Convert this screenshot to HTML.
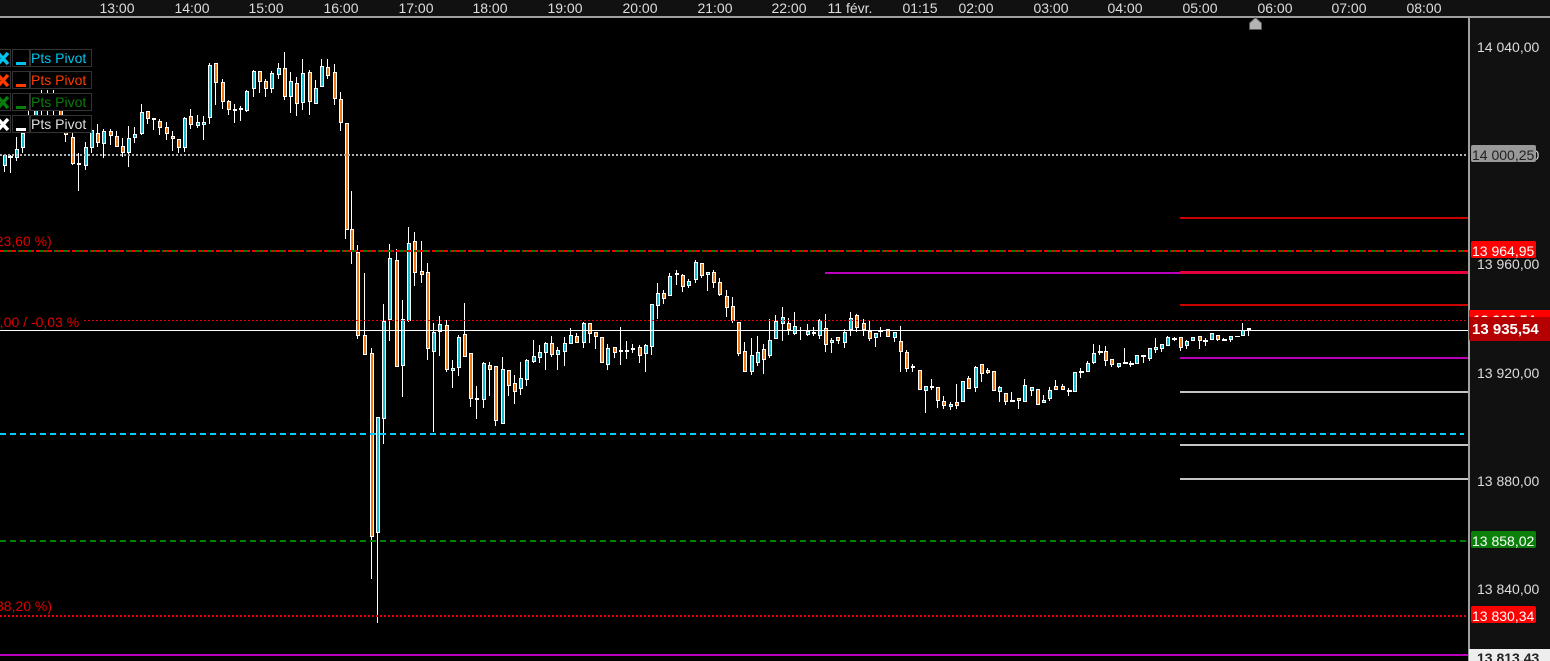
<!DOCTYPE html>
<html><head><meta charset="utf-8"><title>Chart</title>
<style>
html,body{margin:0;padding:0;background:#000}
#c{position:relative;width:1550px;height:661px;overflow:hidden;background:#000;font-family:"Liberation Sans",sans-serif;font-size:14px;line-height:16px;color:#ddd}
#c div{position:absolute;white-space:nowrap}
svg{position:absolute;left:0;top:0}
.t{top:0;width:70px;text-align:center;color:#ddd}
.p{left:1477px;color:#ddd}
.b{left:1471px;width:65px;height:17px;border-radius:2px;color:#fff;line-height:20px;overflow:hidden;text-indent:1px}
.r{color:#e00000}
.l{left:30px;width:60px;height:16px;border:1px solid #333;background:#000;text-indent:0;padding-left:0}
.i{left:12px;width:16px;height:16px;border:1px solid #333;background:#000}
.x{left:-8px;width:17px;height:16px;border:1px solid #333;background:#000}
</style></head><body><div id="c">
<svg width="1550" height="661" viewBox="0 0 1550 661" shape-rendering="crispEdges" fill="none">
<path stroke="#fff" d="M4.5 155V172M10.5 155V173M16.5 137V161M22.5 125V153M28.5 105V125M35.5 100V120M41.5 90V115M47.5 90V115M53.5 90V115M60.5 105V125M65.5 125V142M72.5 130V165M78.5 153V191M85.5 142V170M91.5 128V153M97.5 124V147M103.5 129V158M110.5 129V145M116.5 131V147M122.5 138V157M128.5 126V167M134.5 127V143M141.5 104V135M147.5 111V124M153.5 118V130M159.5 119V135M166.5 122V140M172.5 131V151M178.5 139V153M184.5 117V152M190.5 109V129M197.5 115V128M203.5 116V140M209.5 63V124M215.5 63V105M222.5 79V109M228.5 100V115M234.5 104V123M240.5 106V121M246.5 90V112M253.5 70V97M259.5 71V93M265.5 79V97M271.5 71V93M278.5 63V79M284.5 52V100M290.5 72V113M296.5 77V116M302.5 59V110M309.5 70V115M315.5 80V104M321.5 59V87M327.5 59V79M334.5 64V105M340.5 92V131M345.5 123V239M351.5 191V264M357.5 245V339M364.5 273V355M371.5 348V579M377.5 417V623M383.5 304V444M389.5 244V341M396.5 249V367M402.5 300V397M408.5 227V322M414.5 232V286M421.5 241V283M427.5 263V360M433.5 323V432M439.5 316V356M446.5 320V372M452.5 360V388M458.5 335V376M464.5 303V357M470.5 353V407M476.5 386V419M483.5 362V408M489.5 362V396M495.5 366V426M502.5 357V424M508.5 370V396M514.5 375V404M520.5 362V395M526.5 359V386M533.5 340V363M539.5 345V363M545.5 342V370M551.5 336V357M557.5 347V370M564.5 337V366M570.5 328V344M576.5 333V343M583.5 322V348M589.5 323V343M595.5 332V349M601.5 337V363M607.5 344V370M614.5 347V358M620.5 327V365M626.5 341V359M632.5 344V353M639.5 345V363M645.5 344V372M651.5 304V355M657.5 283V319M663.5 290V304M669.5 273V296M676.5 270V285M682.5 274V292M688.5 279V288M695.5 260V283M701.5 263V278M707.5 272V291M713.5 270V288M719.5 278V296M726.5 290V317M732.5 297V323M738.5 322V356M744.5 342V372M751.5 338V375M757.5 336V366M763.5 344V374M769.5 319V358M775.5 315V339M782.5 307V341M788.5 318V335M794.5 312V335M800.5 327V340M807.5 324V336M813.5 327V336M819.5 319V339M825.5 314V352M831.5 338V353M838.5 337V344M844.5 329V348M850.5 312V336M856.5 314V332M863.5 319V336M869.5 321V341M875.5 333V347M880.5 327V337M887.5 329V337M894.5 332V342M900.5 326V372M906.5 350V372M912.5 364V372M919.5 370V390M925.5 386V413M931.5 379V390M937.5 387V408M943.5 396V409M950.5 402V410M956.5 384V409M962.5 381V402M968.5 376V389M975.5 366V392M981.5 364V382M987.5 368V374M993.5 371V391M999.5 386V402M1005.5 393V405M1011.5 392V402M1018.5 398V409M1024.5 379V402M1031.5 387V396M1037.5 389V405M1043.5 395V403M1049.5 387V401M1055.5 380V390M1062.5 384V390M1068.5 388V396M1074.5 372V392M1080.5 368V378M1087.5 361V372M1093.5 344V364M1099.5 345V355M1105.5 346V366M1111.5 359V367M1118.5 363V368M1124.5 348V364M1130.5 361V367M1136.5 355V364M1143.5 356V363M1149.5 348V361M1155.5 338V353M1161.5 344V352M1167.5 336V346M1174.5 337V341M1180.5 337V351M1186.5 340V349M1192.5 337V341M1199.5 336V349M1205.5 338V346M1211.5 333V340M1217.5 335V341M1223.5 338V341M1230.5 336V342M1242.5 323V336M1248.5 328V336"/>
<path fill="#fff" d="M8 156h5v2H8zM77 163h4v2h-4zM152 118h4v2h-4zM233 109h4v2h-4zM239 108h4v2h-4zM475 398h4v2h-4zM619 350h4v2h-4zM625 350h4v2h-4zM631 348h4v2h-4zM675 273h4v2h-4zM812 332h4v2h-4zM878 330h5v2h-5zM930 386h4v2h-4zM1010 400h5v2h-5zM1067 390h5v2h-5zM1079 371h5v2h-5zM1098 351h5v2h-5zM1123 362h5v2h-5zM1129 363h5v2h-5zM1141 355h5v2h-5zM1172 338h5v2h-5zM1203 340h5v2h-5zM1222 339h5v2h-5zM1235 336h5v1h-5z"/>
<path fill="#14bcd2" stroke="#fff" d="M3.5 155.5h3v10h-3zM15.5 149.5h3v8h-3zM21.5 133.5h3v14h-3zM34.5 105.5h3v10h-3zM84.5 147.5h3v18h-3zM90.5 130.5h3v17h-3zM102.5 131.5h3v12h-3zM127.5 138.5h3v14h-3zM133.5 134.5h3v3h-3zM140.5 112.5h3v21h-3zM183.5 118.5h3v29h-3zM196.5 122.5h3v3h-3zM202.5 122.5h3v2h-3zM208.5 65.5h3v52h-3zM245.5 91.5h3v19h-3zM252.5 71.5h3v17h-3zM270.5 73.5h3v15h-3zM277.5 68.5h3v6h-3zM289.5 81.5h3v15h-3zM301.5 73.5h3v29h-3zM314.5 88.5h3v15h-3zM320.5 66.5h3v20h-3zM376.5 417.5h3v115h-3zM382.5 321.5h3v97h-3zM388.5 258.5h3v61h-3zM401.5 319.5h3v46h-3zM407.5 243.5h3v77h-3zM432.5 332.5h3v19h-3zM438.5 324.5h3v7h-3zM451.5 368.5h3v2h-3zM457.5 337.5h3v30h-3zM482.5 363.5h3v36h-3zM501.5 369.5h3v54h-3zM519.5 378.5h3v10h-3zM525.5 360.5h3v19h-3zM532.5 356.5h3v5h-3zM538.5 352.5h3v5h-3zM544.5 343.5h3v9h-3zM556.5 350.5h3v4h-3zM563.5 343.5h3v8h-3zM569.5 335.5h3v8h-3zM582.5 323.5h3v19h-3zM606.5 348.5h3v16h-3zM644.5 345.5h3v8h-3zM650.5 304.5h3v42h-3zM656.5 293.5h3v12h-3zM668.5 276.5h3v19h-3zM687.5 281.5h3v4h-3zM694.5 262.5h3v17h-3zM706.5 272.5h3v2h-3zM750.5 355.5h3v16h-3zM756.5 352.5h3v10h-3zM768.5 340.5h3v15h-3zM774.5 321.5h3v17h-3zM781.5 317.5h3v6h-3zM793.5 326.5h3v7h-3zM806.5 331.5h3v3h-3zM818.5 320.5h3v15h-3zM830.5 340.5h3v2h-3zM843.5 332.5h3v10h-3zM849.5 318.5h3v11h-3zM874.5 333.5h3v4h-3zM893.5 332.5h3v5h-3zM924.5 386.5h3v4h-3zM949.5 404.5h3v2h-3zM961.5 381.5h3v20h-3zM974.5 367.5h3v20h-3zM998.5 387.5h3v4h-3zM1023.5 385.5h3v16h-3zM1030.5 387.5h3v3h-3zM1042.5 400.5h3v2h-3zM1048.5 390.5h3v8h-3zM1073.5 372.5h3v19h-3zM1086.5 363.5h3v8h-3zM1092.5 353.5h3v9h-3zM1117.5 363.5h3v3h-3zM1135.5 355.5h3v8h-3zM1148.5 348.5h3v10h-3zM1154.5 347.5h3v2h-3zM1160.5 344.5h3v4h-3zM1166.5 337.5h3v8h-3zM1185.5 341.5h3v4h-3zM1191.5 337.5h3v3h-3zM1210.5 333.5h3v6h-3zM1229.5 336.5h3v3h-3zM1241.5 330.5h3v5h-3z"/>
<path fill="#f07a18" stroke="#fff" d="M59.5 105.5h3v11h-3zM64.5 125.5h3v9h-3zM71.5 137.5h3v26h-3zM96.5 133.5h3v9h-3zM109.5 131.5h3v4h-3zM115.5 136.5h3v10h-3zM121.5 146.5h3v6h-3zM146.5 111.5h3v7h-3zM158.5 121.5h3v6h-3zM165.5 127.5h3v6h-3zM171.5 136.5h3v2h-3zM177.5 139.5h3v8h-3zM189.5 116.5h3v8h-3zM214.5 63.5h3v19h-3zM221.5 82.5h3v19h-3zM227.5 101.5h3v8h-3zM258.5 71.5h3v10h-3zM264.5 81.5h3v7h-3zM283.5 68.5h3v28h-3zM295.5 83.5h3v20h-3zM308.5 72.5h3v29h-3zM326.5 67.5h3v8h-3zM333.5 72.5h3v26h-3zM339.5 99.5h3v23h-3zM345.5 123.5h3v106h-3zM350.5 229.5h3v22h-3zM356.5 252.5h3v83h-3zM363.5 335.5h3v19h-3zM370.5 353.5h3v183h-3zM395.5 260.5h3v106h-3zM413.5 241.5h3v31h-3zM420.5 271.5h3v3h-3zM426.5 272.5h3v76h-3zM445.5 325.5h3v44h-3zM463.5 334.5h3v22h-3zM469.5 353.5h3v45h-3zM488.5 365.5h3v4h-3zM494.5 366.5h3v54h-3zM507.5 370.5h3v15h-3zM513.5 383.5h3v8h-3zM550.5 343.5h3v11h-3zM575.5 336.5h3v6h-3zM588.5 323.5h3v10h-3zM594.5 332.5h3v4h-3zM600.5 337.5h3v25h-3zM613.5 347.5h3v5h-3zM638.5 347.5h3v8h-3zM662.5 293.5h3v5h-3zM681.5 275.5h3v11h-3zM700.5 263.5h3v12h-3zM712.5 272.5h3v10h-3zM718.5 282.5h3v12h-3zM725.5 296.5h3v11h-3zM731.5 306.5h3v14h-3zM737.5 322.5h3v31h-3zM743.5 351.5h3v20h-3zM762.5 349.5h3v10h-3zM787.5 323.5h3v6h-3zM824.5 328.5h3v16h-3zM836.5 337.5h3v3h-3zM855.5 315.5h3v12h-3zM862.5 323.5h3v6h-3zM868.5 331.5h3v7h-3zM886.5 329.5h3v7h-3zM899.5 341.5h3v10h-3zM905.5 352.5h3v16h-3zM911.5 366.5h3v1h-3zM918.5 370.5h3v19h-3zM936.5 387.5h3v13h-3zM942.5 401.5h3v4h-3zM955.5 402.5h3v3h-3zM967.5 378.5h3v10h-3zM980.5 364.5h3v9h-3zM986.5 370.5h3v2h-3zM992.5 371.5h3v19h-3zM1004.5 393.5h3v8h-3zM1017.5 398.5h3v2h-3zM1036.5 389.5h3v15h-3zM1054.5 386.5h3v3h-3zM1061.5 386.5h3v3h-3zM1104.5 351.5h3v9h-3zM1110.5 359.5h3v5h-3zM1179.5 337.5h3v10h-3zM1198.5 336.5h3v4h-3zM1216.5 335.5h3v4h-3zM1247.5 328.5h3v1h-3z"/>
<g stroke-width="2">
<path stroke="#b4b4b4" stroke-dasharray="2 2" d="M0 155H1468"/>
<path stroke="#008000" stroke-dasharray="7 2" d="M0 251H1468"/>
<path stroke="#f00000" stroke-dasharray="3 4 2 3" d="M0 251H1468"/>
<path stroke="#00ccff" stroke-dasharray="6 4" d="M0 434H1464"/>
<path stroke="#008000" stroke-dasharray="6 4" d="M0 541H1468"/>
<path stroke="#f00000" stroke-dasharray="2 2" d="M0 616H1468"/>
<path stroke="#bb00bb" d="M0 655H1468"/>
<path stroke="#c80000" d="M1180 218H1468M1180 305H1468"/>
<path stroke="#bb00bb" d="M825 273H1180M1180 358H1468"/>
<path stroke="#e6003c" stroke-width="3" d="M1180 272.500H1468"/>
<path stroke="#c4c4c4" d="M1180 392H1468M1180 445H1468M1180 479H1468"/>
</g>
<path stroke="#f00000" stroke-dasharray="2 2" d="M84 320.500H1468"/>
<path stroke="#fff" d="M0 330.500H1468"/>
<rect x="1468" y="0" width="82" height="661" fill="#111"/>
<rect x="0" y="0" width="1550" height="16" fill="#111"/>
<rect x="0" y="16" width="1550" height="2" fill="#a0a0a0"/>
<rect x="1468" y="18" width="2" height="643" fill="#a0a0a0"/>
<path shape-rendering="auto" fill="#b4b4b4" stroke="#555" d="M1249.500 23L1255.500 17.500L1261.500 23V29.500H1249.500Z"/>
</svg>

<div class="t" style="left:82px">13:00</div><div class="t" style="left:157px">14:00</div><div class="t" style="left:231px">15:00</div><div class="t" style="left:306px">16:00</div><div class="t" style="left:381px">17:00</div><div class="t" style="left:455px">18:00</div><div class="t" style="left:530px">19:00</div><div class="t" style="left:605px">20:00</div><div class="t" style="left:680px">21:00</div><div class="t" style="left:754px">22:00</div><div class="t" style="left:815px">11 févr.</div><div class="t" style="left:885px">01:15</div><div class="t" style="left:941px">02:00</div><div class="t" style="left:1016px">03:00</div><div class="t" style="left:1090px">04:00</div><div class="t" style="left:1165px">05:00</div><div class="t" style="left:1240px">06:00</div><div class="t" style="left:1314px">07:00</div><div class="t" style="left:1389px">08:00</div>

<div class="p" style="top:39px">14 040,00</div>
<div class="p" style="top:147px">14 000,00</div>
<div class="p" style="top:256px">13 960,00</div>
<div class="p" style="top:365px">13 920,00</div>
<div class="p" style="top:473px">13 880,00</div>
<div class="p" style="top:581px">13 840,00</div>
<div class="b" style="top:145px;background:#999;color:#222">14 000,25</div>
<div class="b" style="top:241px;background:#f00">13 964,95</div>
<div class="b" style="top:531px;background:#0a800a">13 858,02</div>
<div class="b" style="top:606px;background:#f00">13 830,34</div>
<div style="left:1469px;top:310px;width:81px;height:22px;background:#f00;color:#fff;font-weight:bold;line-height:20px;text-indent:4px">13 938,54</div>
<div style="left:1469px;top:317px;width:81px;height:24px;background:#b40000;color:#fff;font-weight:bold;font-size:15px;line-height:26px;text-indent:3px;border-radius:0 0 0 2px">13 935,54</div>
<div style="left:1469px;top:649px;width:81px;height:12px;background:#eee;color:#222;font-weight:bold;line-height:18px;text-indent:8px;overflow:visible">13 813,43</div>

<div class="r" style="left:-9px;top:233px">(23,60 %)</div>
<div class="r" style="left:-8px;top:314px">0,00 / -0,03 %</div>
<div class="r" style="left:-4px;top:598px">38,20 %)</div>

<div class="x" style="top:49px"></div><div class="i" style="top:49px"></div><div class="l" style="top:49px;color:#00c4ee">Pts Pivot</div>
<div class="x" style="top:71px"></div><div class="i" style="top:71px"></div><div class="l" style="top:71px;color:#ff3c00">Pts Pivot</div>
<div class="x" style="top:93px"></div><div class="i" style="top:93px"></div><div class="l" style="top:93px;color:#0a7d0a">Pts Pivot</div>
<div class="x" style="top:115px"></div><div class="i" style="top:115px"></div><div class="l" style="top:115px;color:#ddd">Pts Pivot</div>
<svg width="100" height="140" viewBox="0 0 100 140" fill="none" stroke-width="3.5">
<path stroke="#00c4ee" d="M-2 53L8 64M8 53L-2 64"/><path stroke="#00c4ee" stroke-width="3" d="M16 63.500H26"/>
<path stroke="#ff3c00" d="M-2 75L8 86M8 75L-2 86"/><path stroke="#ff3c00" stroke-width="3" d="M16 85.500H26"/>
<path stroke="#0a7d0a" d="M-2 97L8 108M8 97L-2 108"/><path stroke="#0a7d0a" stroke-width="3" d="M16 107.500H26"/>
<path stroke="#fff" d="M-2 119L8 130M8 119L-2 130"/><path stroke="#fff" stroke-width="3" d="M16 129.500H26"/>
</svg>
</div></body></html>
